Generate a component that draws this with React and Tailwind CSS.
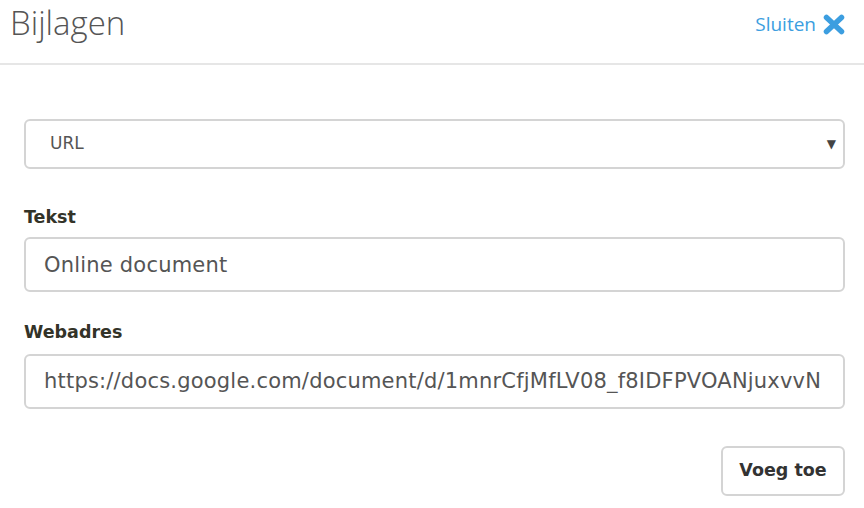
import { useState } from "react";

const CloseIcon = () => (
  <svg width="22" height="21" viewBox="0 0 22 21" className="ml-[7px]">
    <path d="M3.5 3.5 L18.5 17.5 M18.5 3.5 L3.5 17.5" stroke="#3c9ee0" strokeWidth="5.5" strokeLinecap="round" fill="none" />
  </svg>
);

const App = () => {
  const [type, setType] = useState("url");
  const [text, setText] = useState("Online document");
  const [url, setUrl] = useState(
    "https://docs.google.com/document/d/1mnrCfjMfLV08_f8IDFPVOANjuxvvN"
  );

  return (
    <div className="w-[864px] h-[508px] bg-white font-['DejaVu_Sans',sans-serif] text-[#444] overflow-hidden">
      {/* header */}
      <div className="h-[65px] flex items-center justify-between pl-[10px] pr-[19px] border-b-2 border-[#e6e6e6]">
        <h1 className="font-['Open_Sans',sans-serif] font-light text-[33px] text-[#555] -mt-[18px]">
          Bijlagen
        </h1>
        <button className="flex items-center text-[#3c9ee0] text-[19px] font-['Open_Sans',sans-serif] -mt-[14px]">
          Sluiten <CloseIcon />
        </button>
      </div>

      <div className="px-[24px] pr-[19px] pt-[54px] flex flex-col">
        <div className="relative">
          <select
            value={type}
            onChange={(e) => setType(e.target.value)}
            className="appearance-none w-full h-[50px] border-2 border-[#d4d4d4] rounded-[6px] pl-[24px] text-[17px] text-[#555] bg-white font-['DejaVu_Sans',sans-serif]"
          >
            <option value="url">URL</option>
            <option value="file">Bestand</option>
          </select>
          <span className="absolute right-[9px] top-[16px] text-[12px] text-[#444] pointer-events-none">
            ▼
          </span>
        </div>

        <label className="mt-[35px] font-bold text-[17.5px] text-[#333328]">Tekst</label>
        <input
          value={text}
          onChange={(e) => setText(e.target.value)}
          className="mt-[7px] w-full h-[55px] border-2 border-[#d4d4d4] rounded-[6px] px-[18px] text-[21px] tracking-[0.2px] text-[#555]"
        />

        <label className="mt-[27px] font-bold text-[17.5px] text-[#333328]">Webadres</label>
        <input
          value={url}
          onChange={(e) => setUrl(e.target.value)}
          className="mt-[8px] w-full h-[55px] border-2 border-[#d4d4d4] rounded-[6px] px-[18px] text-[21px] tracking-[0.2px] text-[#555]"
        />

        <div className="flex justify-end mt-[37px]">
          <button className="h-[50px] w-[124px] border-2 border-[#d4d4d4] rounded-[6px] font-bold text-[17.5px] text-[#333]">
            Voeg toe
          </button>
        </div>
      </div>
    </div>
  );
};

export default App;
